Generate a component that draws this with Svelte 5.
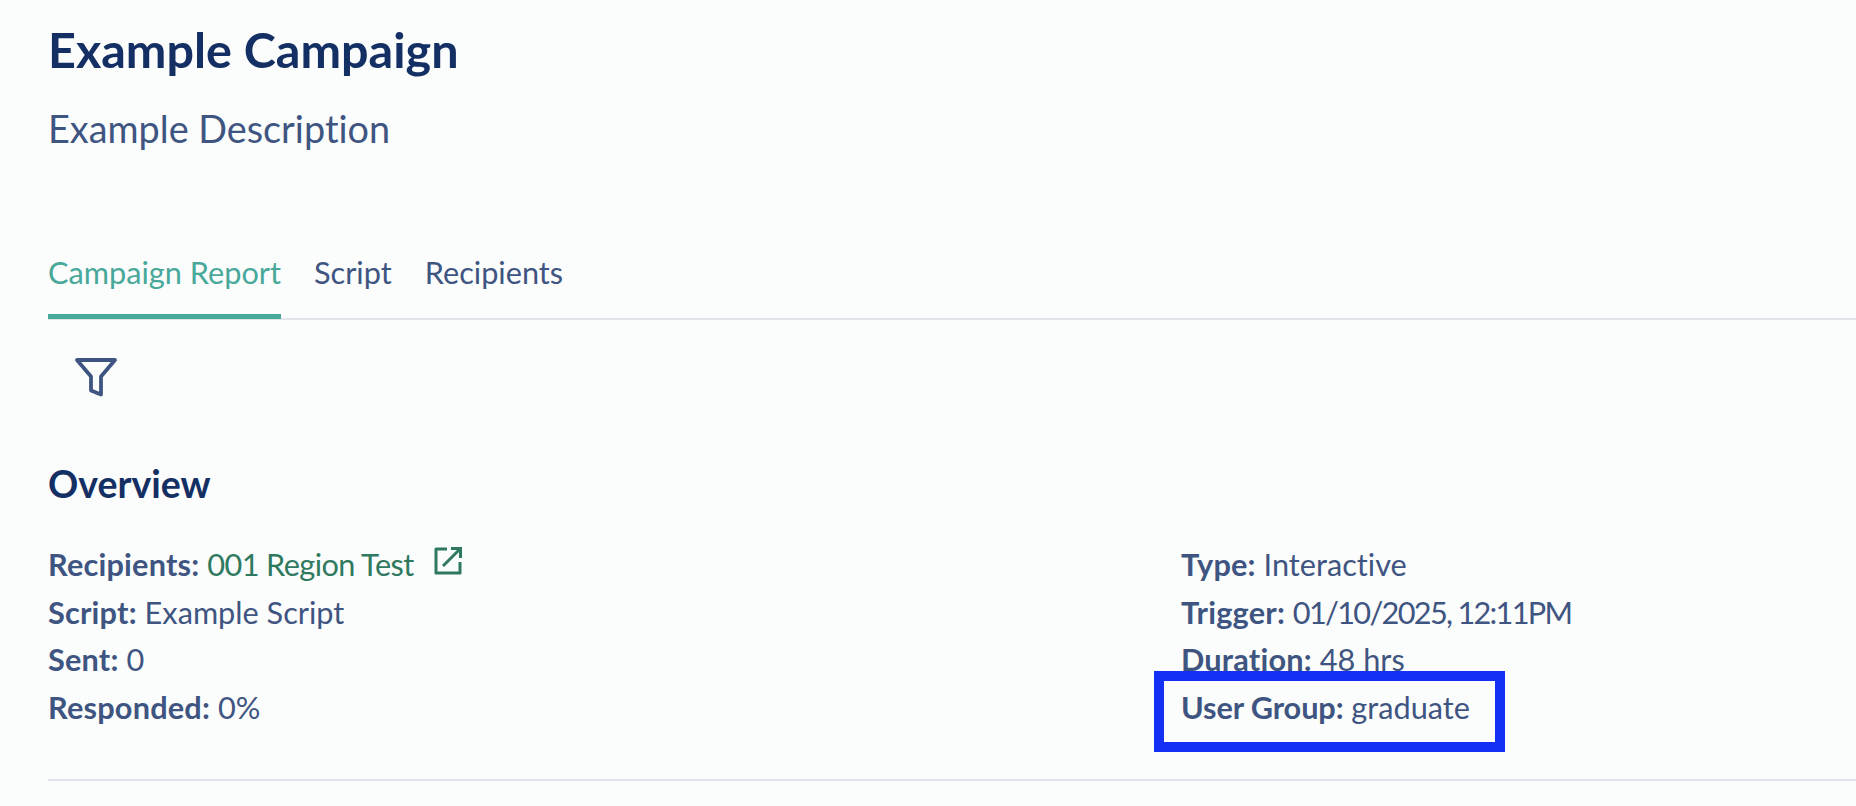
<script>
	const left = [
		{ label: 'Script:', value: 'Example Script' },
		{ label: 'Sent:', value: '0' },
		{ label: 'Responded:', value: '0%' }
	];
	const right = [
		{ label: 'Type:', value: 'Interactive' },
		{ label: 'Trigger:', value: '01/10/2025, 12:11PM', tight: true },
		{ label: 'Duration:', value: '48 hrs' }
	];
	const tabs = ['Campaign Report', 'Script', 'Recipients'];
</script>

<main>
	<h1>Example Campaign</h1>
	<p class="desc">Example Description</p>

	<nav class="tabs">
		{#each tabs as tab, i}
			<button class="tab" class:active={i === 0}>{tab}</button>
		{/each}
	</nav>

	<button class="filter" aria-label="Filter">
		<svg width="44" height="42" viewBox="0 0 44 42" fill="none" stroke="#3f5581" stroke-width="3.8" stroke-linejoin="round">
			<path d="M3 4H41L27 20.500V38.500L17 34.500V20.500Z" />
		</svg>
	</button>

	<section class="overview">
		<h2>Overview</h2>
		<div class="cols">
			<div class="col">
				<div class="row">
					<b>Recipients:</b> <span class="link">001 Region Test</span>
					<svg class="ext" width="30" height="30" viewBox="0 0 30 30" fill="none" stroke="#2f7a5f" stroke-width="3">
						<path d="M14 3H3V27H27V16" stroke-linejoin="round" />
						<path d="M10 20L27 3M18 2.500H27.500V12" />
					</svg>
				</div>
				{#each left as item}
					<div class="row"><b>{item.label}</b> {item.value}</div>
				{/each}
			</div>
			<div class="col">
				{#each right as item}
					<div class="row"><b>{item.label}</b> <span class:tight={item.tight}>{item.value}</span></div>
				{/each}
				<div class="row marked">
					<b>User Group:</b> graduate
					<span class="mark"></span>
				</div>
			</div>
		</div>
	</section>
</main>

<style>
	:global(body) {
		background: #fbfcfc;
	}
	main {
		padding: 24px 0 0 48px;
		font-family: "Lato", "Noto Sans", sans-serif;
		font-variant-ligatures: none;
		color: #3f5581;
	}
	h1 {
		margin: 0;
		font-size: 48.500px;
		line-height: 50px;
		font-weight: 700;
		color: #142f63;
	}
	.desc {
		margin: 35px 0 0;
		font-size: 37.800px;
		line-height: 40px;
	}
	.tabs {
		display: flex;
		gap: 33px;
		margin-top: 106px;
		border-bottom: 2px solid #e2e4ea;
	}
	.tab {
		padding: 0 0 23px;
		border: 0;
		border-bottom: 5px solid transparent;
		margin-bottom: -1px;
		background: none;
		font: inherit;
		font-size: 30.700px;
		line-height: 36px;
		color: inherit;
	}
	.tab.active {
		color: #48a89a;
		border-bottom-color: #48a89a;
	}
	.filter {
		display: block;
		margin: 36px 0 0 26px;
		padding: 0;
		border: 0;
		background: none;
		height: 42px;
	}
	.overview {
		margin-top: 66px;
		border-bottom: 2px solid #e2e4ea;
		padding-bottom: 48px;
	}
	h2 {
		margin: 0;
		font-size: 37.500px;
		line-height: 40px;
		font-weight: 700;
		color: #142f63;
	}
	.cols {
		display: grid;
		grid-template-columns: 1133px 1fr;
		margin-top: 37px;
	}
	.row {
		font-size: 30.700px;
		line-height: 47.500px;
		white-space: nowrap;
	}
	.row b {
		letter-spacing: 0.2px;
	}
	.marked b {
		letter-spacing: -0.1px;
	}
	.link {
		color: #2f7a5f;
		letter-spacing: -0.6px;
	}
	.tight {
		letter-spacing: -1.7px;
	}
	.ext {
		margin-left: 12px;
	}
	.marked {
		position: relative;
	}
	.mark {
		position: absolute;
		left: -27px;
		top: -13px;
		width: 331px;
		height: 61px;
		border: 10px solid #1530f5;
	}
</style>
